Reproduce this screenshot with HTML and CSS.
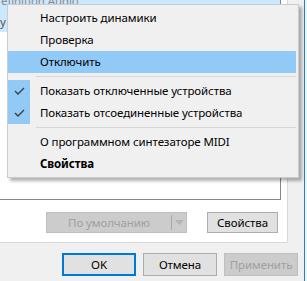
FILE: index.html
```html
<!DOCTYPE html>
<html>
<head>
<meta charset="utf-8">
<link rel="stylesheet" href="styles.css">
</head>
<body>
<div class="window">
  <div class="client">
    <div class="tabpage">
      <div class="list">
        <div class="selected">
          <div class="line1">efinition Audio</div>
          <div class="line2">y</div>
          <div class="meter"></div>
        </div>
      </div>
      <div class="actions">
        <div class="split disabled">
          <span class="split-main">По умолчанию</span>
          <span class="split-sep"></span>
          <span class="split-arrow"><svg width="9" height="5" viewBox="0 0 9 5"><path d="M0 0H9L4.5 5Z" fill="#b4b4b4"/></svg></span>
        </div>
        <div class="btn props">Свойства</div>
      </div>
    </div>
    <div class="buttons">
      <div class="btn default">OK</div>
      <div class="btn">Отмена</div>
      <div class="btn disabled">Применить</div>
    </div>
  </div>
  <div class="edge"></div>
  <div class="outside"></div>

  <div class="menu">
    <div class="item">Настроить динамики</div>
    <div class="item">Проверка</div>
    <div class="item hot">Отключить</div>
    <div class="sep"></div>
    <div class="checks">
      <div class="item checked"><svg class="check" width="22" height="22" viewBox="0 0 22 22"><polyline points="7,11 10,14 16,8" fill="none" stroke="#3c3c3c" stroke-width="1.3"/></svg>Показать отключенные устройства</div>
      <div class="item checked"><svg class="check" width="22" height="22" viewBox="0 0 22 22"><polyline points="7,11 10,14 16,8" fill="none" stroke="#3c3c3c" stroke-width="1.3"/></svg>Показать отсоединенные устройства</div>
    </div>
    <div class="sep"></div>
    <div class="item">О программном синтезаторе MIDI</div>
    <div class="item bold">Свойства</div>
  </div>
</div>
</body>
</html>
```

FILE: styles.css
```css
html, body {
  margin: 0;
  padding: 0;
}
body {
  width: 307px;
  height: 281px;
  overflow: hidden;
  font-family: "Noto Sans", "Open Sans", sans-serif;
  font-size: 11.5px;
  letter-spacing: -0.1px;
  color: #000;
}
.window {
  position: relative;
  width: 307px;
  height: 281px;
  display: flex;
  background: #f0f0f0;
}
.client {
  width: 304px;
  display: flex;
  flex-direction: column;
}
.edge {
  width: 1px;
  background: #1883d7;
}
.outside {
  flex: 1;
  background: #f4f4f4;
}
.tabpage {
  width: 288px;
  height: 243px;
  box-sizing: border-box;
  background: #fff;
  border-right: 1px solid #d9d9d9;
  border-bottom: 1px solid #d9d9d9;
  display: flex;
  flex-direction: column;
}
.list {
  width: 281px;
  height: 200px;
  box-sizing: border-box;
  border-right: 1px solid #828790;
  border-bottom: 1px solid #828790;
  background: #fff;
}
.selected {
  position: relative;
  height: 37px;
  background: #cce8ff;
  color: #8a8a8a;
  line-height: 12px;
}
.line1 {
  margin-top: -5px;
  padding-left: 1px;
}
.line2 {
  margin-top: 9px;
  color: #555;
}
.meter {
  position: absolute;
  left: 255px;
  top: 1px;
  width: 13px;
  height: 3px;
  background: #36b04a;
}
.actions {
  display: flex;
  margin-top: 12px;
  padding-left: 46px;
}
.split {
  width: 141px;
  height: 21px;
  box-sizing: border-box;
  border: 1px solid #bfbfbf;
  background: #cccccc;
  color: #a0a0a0;
  display: flex;
  align-items: center;
}
.split-main {
  flex: 1;
  text-align: center;
}
.split-sep {
  width: 1px;
  height: 15px;
  background: #a8a8a8;
}
.split-arrow {
  width: 14px;
  display: flex;
  justify-content: center;
}
.btn {
  height: 22px;
  box-sizing: border-box;
  border: 1px solid #adadad;
  background: #e1e1e1;
  display: flex;
  align-items: center;
  justify-content: center;
}
.props {
  width: 71px;
  height: 21px;
  margin-left: 20px;
}
.buttons {
  display: flex;
  gap: 7px;
  margin-top: 10px;
  padding-left: 62px;
}
.buttons .btn {
  width: 74px;
  height: 23px;
}
.btn.default {
  border: 2px solid #0078d7;
}
.btn.disabled {
  border-color: #bfbfbf;
  background: #cccccc;
  color: #a0a0a0;
}
.menu {
  position: absolute;
  left: 7px;
  top: 4px;
  width: 292px;
  box-sizing: border-box;
  border: 1px solid #cccccc;
  background: #f0f0f0;
  padding: 2px 2px 2px 0;
  box-shadow: 3px 3px 3px rgba(0, 0, 0, 0.3);
}
.item {
  height: 22px;
  line-height: 22px;
  padding-left: 32px;
  white-space: nowrap;
  position: relative;
}
.item.hot {
  background: #91c9f7;
}
.item.bold {
  font-weight: bold;
}
.checks {
  background: linear-gradient(to right, #91c9f7 22px, transparent 22px);
}
.check {
  position: absolute;
  left: 0;
  top: 0;
}
.sep {
  height: 7px;
  margin-left: 28px;
  position: relative;
}
.sep::after {
  content: "";
  position: absolute;
  left: 0;
  right: 0;
  top: 3px;
  height: 1px;
  background: #d7d7d7;
}
```
